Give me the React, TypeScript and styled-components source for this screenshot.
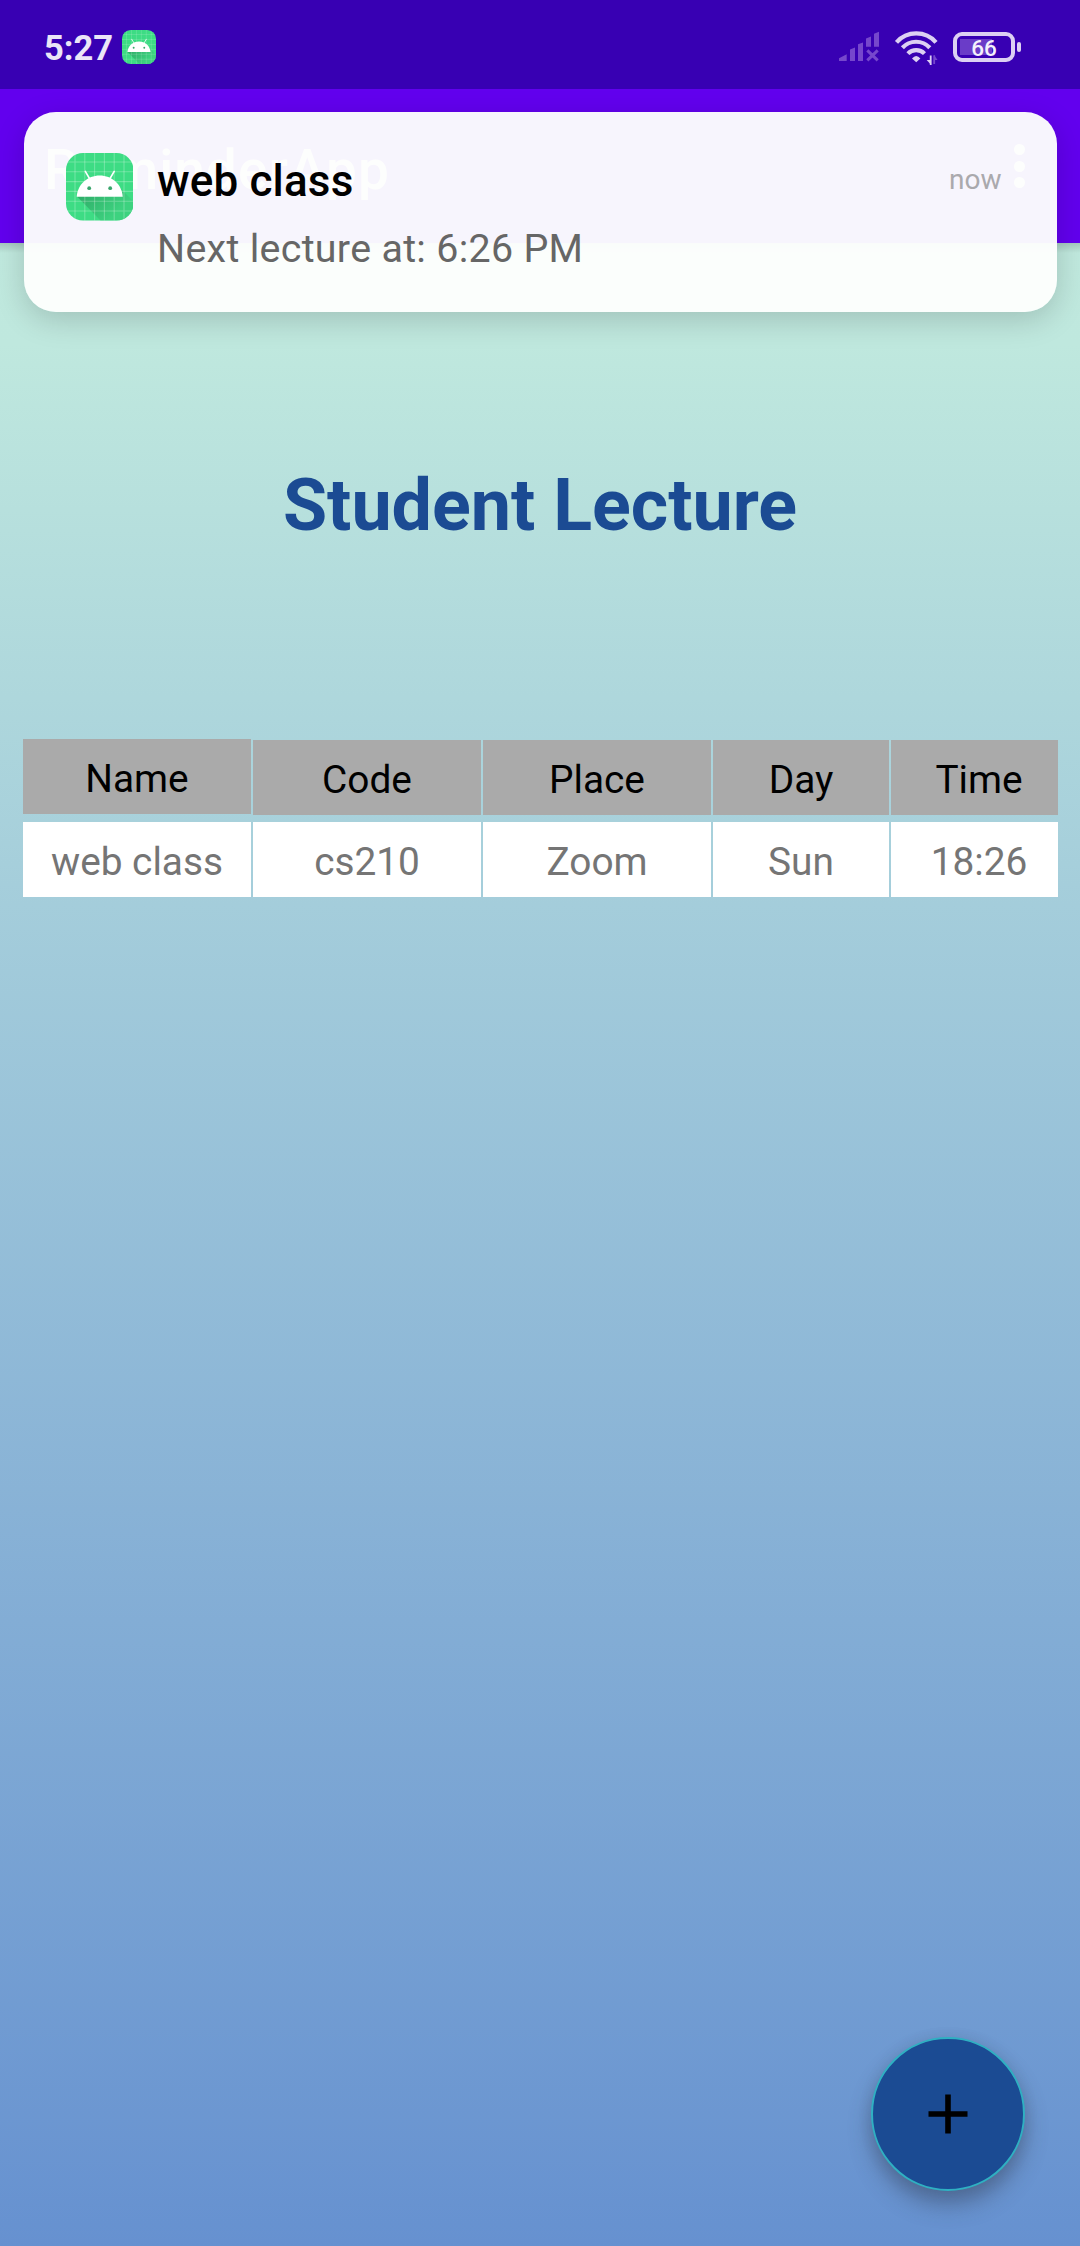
import React from "react";
import styled, { createGlobalStyle } from "styled-components";

const Global = createGlobalStyle`
  html, body { margin: 0; padding: 0; }
  * { box-sizing: border-box; }
`;

const Screen = styled.div`
  position: relative;
  width: 1080px;
  height: 2246px;
  overflow: hidden;
  display: flex;
  flex-direction: column;
  font-family: Roboto, sans-serif;
  background: #c0e9de;
`;

const StatusBar = styled.header`
  height: 89px;
  flex: none;
  display: flex;
  align-items: center;
  padding: 5px 59px 0 44px;
  background: #3800b3;
`;

const Clock = styled.span`
  width: 78px;
  padding-top: 2px;
  font-size: 34.5px;
  font-weight: 700;
  line-height: 40px;
  color: #ebe5f7;
  white-space: nowrap;
`;

const StatusIcons = styled.div`
  margin-left: auto;
  display: flex;
  align-items: center;
`;

const StatusGlyph = styled.svg`
  display: block;
  flex: none;
  overflow: visible;
`;

const AppBar = styled.div`
  height: 154px;
  flex: none;
  display: flex;
  justify-content: space-between;
  align-items: flex-start;
  padding: 49px 55px 0 44px;
  background: #6200ee;
`;

const AppTitle = styled.h1`
  margin: 0;
  font-size: 55px;
  line-height: 64px;
  font-weight: 500;
  letter-spacing: 1.05px;
  color: #fff;
`;

const Overflow = styled.div`
  display: flex;
  flex-direction: column;
  gap: 5.5px;
  padding-top: 6px;
`;

const Dot = styled.i`
  width: 11px;
  height: 11px;
  border-radius: 50%;
  background: #fff;
`;

const Content = styled.main`
  flex: 1;
  display: flex;
  flex-direction: column;
  align-items: flex-start;
  background:
    linear-gradient(180deg, rgba(0, 0, 0, 0.14), rgba(0, 0, 0, 0)) 0 0 / 100% 10px no-repeat,
    linear-gradient(180deg, #c0e9de 0%, #bfe8de 5%, #a5cedb 32%, #6691d0 100%);
`;

const Heading = styled.h2`
  align-self: center;
  margin: 221px 0 0;
  font-size: 71.8px;
  line-height: 84px;
  font-weight: 700;
  color: #1b4b93;
  white-space: nowrap;
`;

const Table = styled.div`
  display: grid;
  grid-template-columns: 228px 228px 228px 176px 167px;
  column-gap: 2px;
  row-gap: 7px;
  margin: 191px 0 0 23px;
  overflow: hidden;
`;

const Cell = styled.div<{ $head?: boolean; $raised?: boolean; $clipped?: boolean }>`
  height: 75px;
  margin-top: ${(p) => (p.$head && !p.$raised ? "1px" : "0")};
  width: ${(p) => (p.$clipped ? "176px" : "auto")};
  padding-top: 4px;
  display: flex;
  align-items: center;
  justify-content: center;
  font-size: 38.8px;
  line-height: 46px;
  white-space: nowrap;
  color: ${(p) => (p.$head ? "#000" : "#757575")};
  background: ${(p) => (p.$head ? "#aaa" : "#fff")};
`;

const Toast = styled.section`
  position: absolute;
  left: 23.5px;
  top: 111.5px;
  width: 1033px;
  height: 200px;
  border-radius: 32px;
  display: flex;
  align-items: flex-start;
  padding: 41.5px 55px 0 42px;
  background: rgba(253, 254, 253, 0.965);
  box-shadow: 0 8px 30px rgba(0, 0, 0, 0.17);
`;

const ToastBody = styled.div`
  flex: 1;
  margin: 2px 0 0 24px;
  display: flex;
  flex-direction: column;
`;

const ToastTitle = styled.div`
  font-size: 44px;
  line-height: 52px;
  font-weight: 500;
  letter-spacing: 0.15px;
  color: #000;
`;

const ToastText = styled.div`
  margin-top: 19px;
  font-size: 39.4px;
  line-height: 46px;
  letter-spacing: 0.3px;
  color: #666;
`;

const ToastTime = styled.div`
  margin-top: 10px;
  font-size: 28px;
  line-height: 33px;
  color: #aaa9ad;
`;

const Fab = styled.button`
  position: absolute;
  left: 871px;
  top: 2037px;
  width: 154px;
  height: 154px;
  padding: 0;
  border: 2px solid #2fb0c2;
  border-radius: 50%;
  display: flex;
  align-items: center;
  justify-content: center;
  background: #1b4b93;
  box-shadow: 0 14px 22px rgba(50, 60, 80, 0.42), 0 2px 14px rgba(50, 60, 80, 0.14);
`;

const IconSvg = styled.svg`
  display: block;
  flex: none;
`;

const GRID = [9, 18.8, 28.6, 38.4, 48.2, 58];

function AppIcon({ size, id }: { size: number; id: string }) {
  return (
    <IconSvg width={size} height={size} viewBox="0 0 67.5 67.5">
      <defs>
        <clipPath id={id}>
          <rect width="67.5" height="67.5" rx="17" />
        </clipPath>
        <linearGradient id={id + "s"} x1="0" y1="0" x2="1" y2="0.6">
          <stop offset="0.15" stopColor="#2fae69" />
          <stop offset="0.85" stopColor="#3dd27f" />
        </linearGradient>
      </defs>
      <g clipPath={`url(#${id})`}>
        <rect width="68" height="68" fill="#3ddc84" />
        <path d="M11 43.500L34.500 67.500H68V49L54 35Z" fill={`url(#${id}s)`} />
        {GRID.map((v) => (
          <path key={v} d={`M${v} 0V68M0 ${v}H68`} stroke="#fff" strokeOpacity="0.26" strokeWidth="1.1" />
        ))}
      </g>
      <path d="M10.700 43.800C11.500 31.500 21.500 22.600 33.700 22.600S56 31.500 56.700 43.800Z" fill="#fff" />
      <path d="M23.500 25.500L19.300 18.400M44 25.500L48.200 18.400" stroke="#fff" strokeWidth="1.600" strokeLinecap="round" />
      <circle cx="23.200" cy="35.200" r="1.900" fill="#38a56b" />
      <circle cx="44.200" cy="35.200" r="1.900" fill="#38a56b" />
    </IconSvg>
  );
}

const Signal = () => (
  <StatusGlyph width="42" height="34" viewBox="0 0 42 34" fill="#7647cc">
    <path d="M1 31V28.300L8.700 24.300V31ZM12 31V19.500L17 17.500V31ZM20 31V14.200L25 12.400V31ZM28 16.700V8.500L33 6.500V16.700ZM36 16.700V3.700L41 1.700V16.700Z" />
    <path d="M29.300 20.300L39.700 30.300M39.700 20.300L29.300 30.300" stroke="#7647cc" strokeWidth="3" />
  </StatusGlyph>
);

const Wifi = () => (
  <StatusGlyph width="44" height="34" viewBox="0 0 44 34" fill="none" stroke="#dcd0f3" strokeWidth="4.2">
    <path d="M2.500 12.300A26.300 26.300 0 0 1 42 12.300" />
    <path d="M8.400 17.700A18.700 18.700 0 0 1 35.800 17.700" />
    <path d="M13.900 23.600A11.600 11.600 0 0 1 30.500 23.600" />
    <path d="M18 28.600Q22.200 23.500 26.400 28.600L22.200 32.300Z" fill="#dcd0f3" stroke="none" />
    <path d="M36.700 25.500V35" strokeWidth="1.800" />
    <path d="M32.700 30H36.700V34.500Z" fill="#dcd0f3" stroke="none" />
    <path d="M40.200 25.300V34" stroke="#7647cc" strokeWidth="1.800" />
    <path d="M40.200 25L43.500 30H40.200Z" fill="#7647cc" stroke="none" />
  </StatusGlyph>
);

const Battery = styled.div`
  position: relative;
  width: 62px;
  height: 30px;
  margin-left: 15px;
  padding-top: 2px;
  border: 4px solid #dcd0f3;
  border-radius: 9px;
  display: flex;
  align-items: center;
  justify-content: center;
  font-size: 22.5px;
  font-weight: 500;
  line-height: 22px;
  color: #f4f0fc;
  background: linear-gradient(#6a3cc8, #6a3cc8) 3px 3px / 32px 16px no-repeat;
`;

const BatteryCap = styled.i`
  width: 4px;
  height: 10px;
  margin-left: 2px;
  border-radius: 2px;
  background: #dcd0f3;
`;

const Gap = styled.span`
  width: 14px;
`;

const HEAD = ["Name", "Code", "Place", "Day", "Time"];
const ROW = ["web class", "cs210", "Zoom", "Sun", "18:26"];

export default function App() {
  return (
    <Screen>
      <Global />
      <StatusBar>
        <Clock>5:27</Clock>
        <AppIcon size={34} id="small" />
        <StatusIcons>
          <Signal />
          <Gap />
          <Wifi />
          <Battery>66</Battery>
          <BatteryCap />
        </StatusIcons>
      </StatusBar>
      <AppBar>
        <AppTitle>ReminderApp</AppTitle>
        <Overflow>
          <Dot />
          <Dot />
          <Dot />
        </Overflow>
      </AppBar>
      <Content>
        <Heading>Student Lecture</Heading>
        <Table>
          {HEAD.map((t, i) => (
            <Cell key={t} $head $raised={i === 0} $clipped={i === 4}>
              {t}
            </Cell>
          ))}
          {ROW.map((t, i) => (
            <Cell key={t} $clipped={i === 4}>
              {t}
            </Cell>
          ))}
        </Table>
      </Content>
      <Toast>
        <AppIcon size={67.5} id="large" />
        <ToastBody>
          <ToastTitle>web class</ToastTitle>
          <ToastText>Next lecture at: 6:26 PM</ToastText>
        </ToastBody>
        <ToastTime>now</ToastTime>
      </Toast>
      <Fab aria-label="Add">
        <svg width="40" height="40" viewBox="0 0 40 40">
          <path d="M20 0.500V39.500M0.500 20H39.500" stroke="#000" strokeWidth="5.600" />
        </svg>
      </Fab>
    </Screen>
  );
}
